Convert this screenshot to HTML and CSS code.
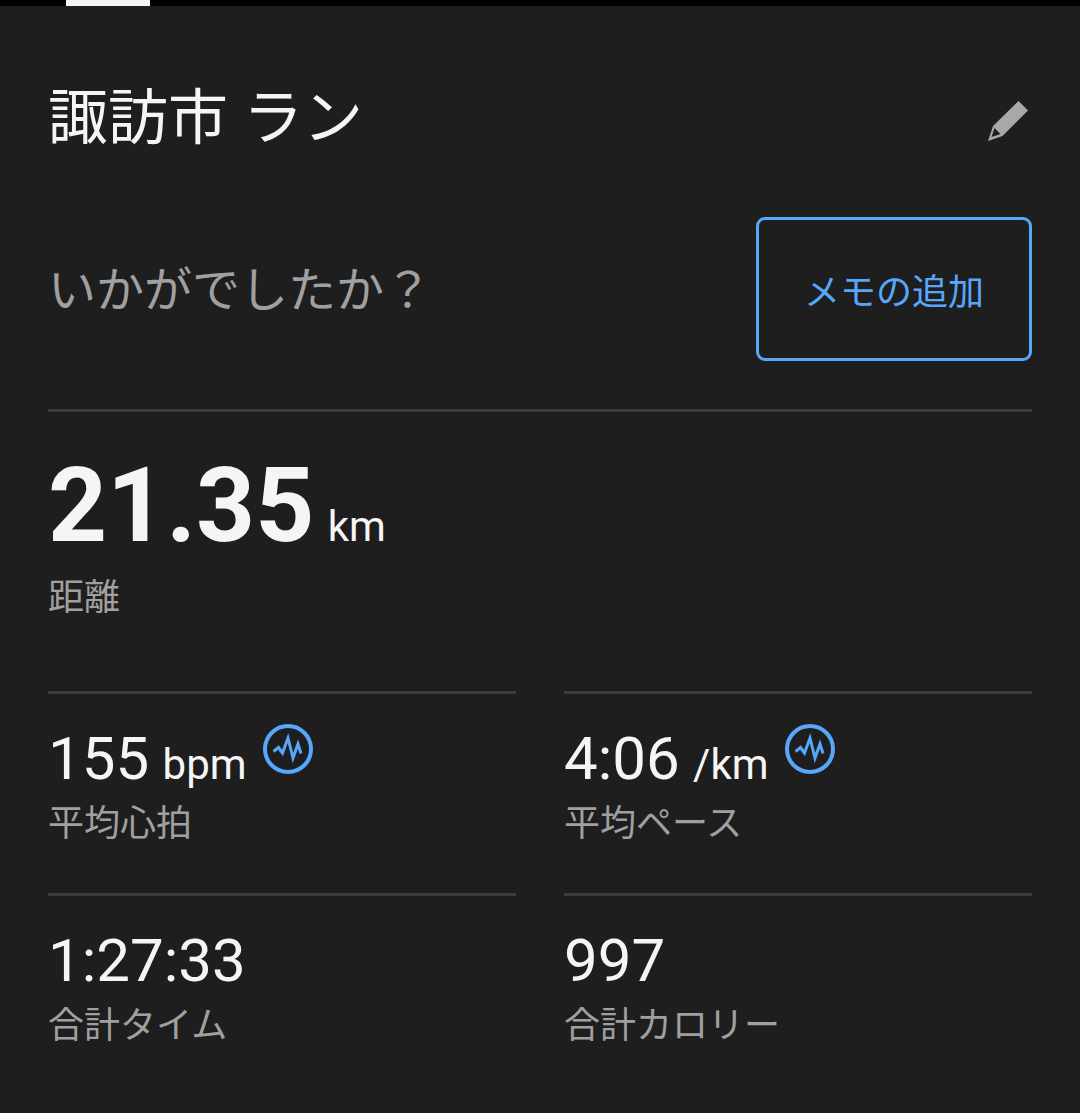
FILE: index.html
```html
<!DOCTYPE html>
<html lang="ja">
<head>
  <meta charset="UTF-8" />
  <meta name="viewport" content="width=device-width, initial-scale=1.0" />
  <title>諏訪市 ラン</title>
  <link rel="stylesheet" href="styles.css">
</head>
<body>
  <div class="tab-bar">
    <div class="tab-indicator"></div>
  </div>

  <main class="activity">
    <header class="title-row">
      <h1 class="title">諏訪市 ラン</h1>
      <button class="icon-btn" type="button" aria-label="編集">
        <svg width="48" height="48" viewBox="0 0 48 48" aria-hidden="true">
          <path d="M34.500 3 L44 12.500 L18.500 38 L4 43 L9 28 Z M10.500 30 L7.500 39 L16.500 36 Z" fill="#a8a8a8" fill-rule="evenodd" />
        </svg>
      </button>
    </header>

    <section class="memo-row">
      <p class="prompt">いかがでしたか？</p>
      <button class="memo-btn" type="button">メモの追加</button>
    </section>

    <section class="distance">
      <p class="big-value">21.35<span class="unit"> km</span></p>
      <p class="label">距離</p>
    </section>

    <section class="stats">
      <div class="stat">
        <div class="value-row">
          <p class="value">155<span class="unit"> bpm</span></p>
          <svg class="pulse" viewBox="0 0 50 50" aria-hidden="true">
            <circle cx="25" cy="25" r="23" />
            <path d="M10.500 27.500 L15.500 23.500 L19.500 29 L25 14 L30 34 L35 20 L38 29.500" />
          </svg>
        </div>
        <p class="label">平均心拍</p>
      </div>
      <div class="stat">
        <div class="value-row">
          <p class="value">4:06<span class="unit"> /km</span></p>
          <svg class="pulse" viewBox="0 0 50 50" aria-hidden="true">
            <circle cx="25" cy="25" r="23" />
            <path d="M10.500 27.500 L15.500 23.500 L19.500 29 L25 14 L30 34 L35 20 L38 29.500" />
          </svg>
        </div>
        <p class="label">平均ペース</p>
      </div>
      <div class="stat">
        <p class="value">1:27:33</p>
        <p class="label">合計タイム</p>
      </div>
      <div class="stat">
        <p class="value">997</p>
        <p class="label">合計カロリー</p>
      </div>
    </section>
  </main>
</body>
</html>
```
FILE: styles.css
```css
* {
  box-sizing: border-box;
}
body {
  margin: 0;
  background: #1e1e1e;
  color: #f5f5f5;
  font-family: Roboto, "Noto Sans CJK JP", sans-serif;
}
h1, p {
  margin: 0;
  font-weight: 400;
}
button {
  background: none;
  font-family: inherit;
  cursor: pointer;
}

.tab-bar {
  height: 6px;
  padding-left: 66px;
  background: #000;
}
.tab-indicator {
  width: 84px;
  height: 100%;
  background: #f5f5f5;
}

.activity {
  padding: 78px 48px 16px;
}

/* Title + edit */
.title-row {
  display: flex;
  justify-content: space-between;
  align-items: center;
}
.title {
  font-size: 60px;
  line-height: 70px;
}
.icon-btn {
  display: flex;
  padding: 6px 0 0;
  border: none;
}

/* Memo */
.memo-row {
  display: flex;
  justify-content: space-between;
  align-items: center;
  padding: 63px 0 48px;
}
.prompt {
  padding-top: 4px;
  color: #a0a0a0;
  font-size: 48px;
  line-height: 60px;
}
.memo-btn {
  height: 144px;
  padding: 0 45px;
  border: 3px solid #57a6fc;
  border-radius: 9px;
  color: #57a6fc;
  font-size: 36px;
}

/* Stats */
.distance {
  padding: 34px 0 66px;
  border-top: 3px solid #3c3c3c;
}
.big-value {
  margin-bottom: 5px;
  font-size: 103px;
  font-weight: 700;
  line-height: 120px;
}
.unit {
  margin-left: 3px;
  font-size: 42px;
  font-weight: 400;
  line-height: 1;
}
.stats {
  display: grid;
  grid-template-columns: 1fr 1fr;
  column-gap: 48px;
}
.stat {
  padding: 30px 0 42px;
  border-top: 3px solid #3c3c3c;
}
.value-row {
  display: flex;
  gap: 16px;
}
.value {
  margin-bottom: 3px;
  font-size: 60px;
  line-height: 70px;
}
.label {
  color: #a0a0a0;
  font-size: 36px;
  line-height: 54px;
}
.pulse {
  width: 50px;
  height: 50px;
  fill: none;
  stroke: #57a6fc;
  stroke-width: 4;
}
.pulse path {
  stroke-width: 3;
}
```
